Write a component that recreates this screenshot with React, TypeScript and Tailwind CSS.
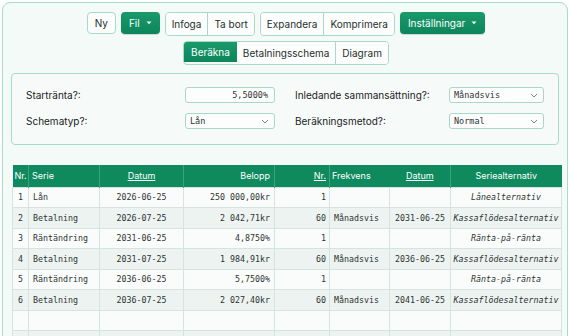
import React from "react";

const sans = { fontFamily: "Inter, 'Noto Sans', sans-serif" };
const mono = { fontFamily: "'DejaVu Sans Mono', monospace" };

function Chevron() {
  return (
    <svg width="8" height="5" viewBox="0 0 8 5" fill="none" className="shrink-0">
      <path d="M1 1 L4 4 L7 1" stroke="#6b7280" strokeWidth="0.9" />
    </svg>
  );
}

function Caret() {
  return (
    <svg width="6" height="4" viewBox="0 0 6 4" className="ml-[6px]">
      <path d="M0.5 0.5 L5.5 0.5 L3 3.2 Z" fill="#ffffff" />
    </svg>
  );
}

const outlineBtn =
  "h-[22px] px-[6px] flex items-center bg-[#fbfefd] text-[#27302c] text-[10px]";
const greenBtn =
  "h-[22px] px-[8px] flex items-center rounded-[4px] bg-gradient-to-b from-[#1a9a6c] to-[#0c855a] text-white text-[10px] shadow-[0_1px_1px_rgba(0,0,0,0.15)]";

type Row = {
  nr: string;
  serie: string;
  datum: string;
  belopp: string;
  n: string;
  frek: string;
  datum2: string;
  alt: string;
};

const rows: Row[] = [
  { nr: "1", serie: "Lån", datum: "2026-06-25", belopp: "250 000,00kr", n: "1", frek: "", datum2: "", alt: "Lånealternativ" },
  { nr: "2", serie: "Betalning", datum: "2026-07-25", belopp: "2 042,71kr", n: "60", frek: "Månadsvis", datum2: "2031-06-25", alt: "Kassaflödesalternativ" },
  { nr: "3", serie: "Räntändring", datum: "2031-06-25", belopp: "4,8750%", n: "1", frek: "", datum2: "", alt: "Ränta-på-ränta" },
  { nr: "4", serie: "Betalning", datum: "2031-07-25", belopp: "1 984,91kr", n: "60", frek: "Månadsvis", datum2: "2036-06-25", alt: "Kassaflödesalternativ" },
  { nr: "5", serie: "Räntändring", datum: "2036-06-25", belopp: "5,7500%", n: "1", frek: "", datum2: "", alt: "Ränta-på-ränta" },
  { nr: "6", serie: "Betalning", datum: "2036-07-25", belopp: "2 027,40kr", n: "60", frek: "Månadsvis", datum2: "2041-06-25", alt: "Kassaflödesalternativ" },
  { nr: "", serie: "", datum: "", belopp: "", n: "", frek: "", datum2: "", alt: "" },
  { nr: "", serie: "", datum: "", belopp: "", n: "", frek: "", datum2: "", alt: "" },
];

const field =
  "h-[16px] rounded-[3px] border border-[#a9d8c7] bg-[#fbfefd] flex items-center text-[8.5px] text-[#333]";

export default function App() {
  return (
    <div className="w-[570px] h-[336px] overflow-hidden bg-white" style={sans}>
      <div className="mx-[2px] mt-[2px] h-[360px] rounded-[8px] border border-[#a6dcc9] bg-[#f3faf8] px-[8px] pt-[9px]">
        {/* toolbar row 1 */}
        <div className="flex justify-center gap-[5px] pl-[2px]">
          <div className={outlineBtn + " rounded-[4px] border border-[#a9d8c7] px-[7px]"}>Ny</div>
          <div className={greenBtn}>
            Fil
            <Caret />
          </div>
          <div className="flex rounded-[4px] border border-[#a9d8c7] overflow-hidden">
            <div className={outlineBtn + " h-[20px]"}>Infoga</div>
            <div className={outlineBtn + " h-[20px] border-l border-[#a9d8c7]"}>Ta bort</div>
          </div>
          <div className="flex rounded-[4px] border border-[#a9d8c7] overflow-hidden">
            <div className={outlineBtn + " h-[20px]"}>Expandera</div>
            <div className={outlineBtn + " h-[20px] border-l border-[#a9d8c7]"}>Komprimera</div>
          </div>
          <div className={greenBtn}>
            Inställningar
            <Caret />
          </div>
        </div>
        {/* toolbar row 2 */}
        <div className="mt-[5px] flex justify-center pl-[2px]">
          <div className="flex rounded-[4px] border border-[#a9d8c7] overflow-hidden">
            <div className="h-[20px] px-[7px] flex items-center bg-gradient-to-b from-[#1a9a6c] to-[#0c855a] text-white text-[10px]">
              Beräkna
            </div>
            <div className={outlineBtn + " h-[20px]"}>Betalningsschema</div>
            <div className={outlineBtn + " h-[20px] border-l border-[#a9d8c7]"}>Diagram</div>
          </div>
        </div>

        {/* settings panel */}
        <div className="mt-[8px] rounded-[4px] border border-[#a6dcc9] bg-[#f6fbfa] pl-[14px] pt-[13px] pb-[15px] text-[10px] text-[#222]">
          <div className="flex items-center h-[16px]">
            <div className="w-[159px] whitespace-nowrap">Starträntа?:</div>
            <div className={field + " w-[90px] justify-end pr-[6px]"} style={mono}>
              5,5000%
            </div>
            <div className="w-[154px] ml-[20px] whitespace-nowrap">Inledande sammansättning?:</div>
            <div className={field + " w-[95px] justify-between pl-[4px] pr-[5px]"} style={mono}>
              Månadsvis
              <Chevron />
            </div>
          </div>
          <div className="flex items-center h-[16px] mt-[10px]">
            <div className="w-[159px] whitespace-nowrap">Schematyp?:</div>
            <div className={field + " w-[90px] justify-between pl-[4px] pr-[5px]"} style={mono}>
              Lån
              <Chevron />
            </div>
            <div className="w-[154px] ml-[20px] whitespace-nowrap">Beräkningsmetod?:</div>
            <div className={field + " w-[95px] justify-between pl-[4px] pr-[5px]"} style={mono}>
              Normal
              <Chevron />
            </div>
          </div>
        </div>

        {/* table */}
        <div className="mt-[20px] ml-[1px]">
          <table className="table-fixed border-collapse w-[549px]">
            <colgroup>
              <col className="w-[16px]" />
              <col className="w-[71px]" />
              <col className="w-[84px]" />
              <col className="w-[91px]" />
              <col className="w-[55px]" />
              <col className="w-[60px]" />
              <col className="w-[61px]" />
              <col className="w-[111px]" />
            </colgroup>
            <thead>
              <tr className="h-[22px] bg-[#0e8a5e] text-white text-[9px]">
                <th className="font-normal text-left pl-[2px] border-r border-[#3aa47e]">Nr.</th>
                <th className="font-normal text-left pl-[3px] border-r border-[#3aa47e]">Serie</th>
                <th className="font-normal text-center underline border-r border-[#3aa47e]">Datum</th>
                <th className="font-normal text-right pr-[4px] border-r border-[#3aa47e]">Belopp</th>
                <th className="font-normal text-right pr-[3px] underline border-r border-[#3aa47e]">Nr.</th>
                <th className="font-normal text-left pl-[2px]">Frekvens</th>
                <th className="font-normal text-center underline border-r border-[#3aa47e]">Datum</th>
                <th className="font-normal text-center">Seriealternativ</th>
              </tr>
            </thead>
            <tbody className="text-[8.3px] text-[#2e3431]" style={mono}>
              {rows.map((r, i) => (
                <tr
                  key={i}
                  className={
                    "h-[20.5px] " + (i % 2 === 1 ? "bg-[#ecf3f0]" : "bg-[#fafcfb]")
                  }
                >
                  <td className="border border-[#d6e4df] pl-[5px] whitespace-nowrap">{r.nr}</td>
                  <td className="border border-[#d6e4df] pl-[4px] whitespace-nowrap">{r.serie}</td>
                  <td className="border border-[#d6e4df] text-center whitespace-nowrap">{r.datum}</td>
                  <td className="border border-[#d6e4df] text-right pr-[4px] whitespace-nowrap">{r.belopp}</td>
                  <td className="border border-[#d6e4df] text-right pr-[3px] whitespace-nowrap">{r.n}</td>
                  <td className="border border-[#d6e4df] pl-[4px] whitespace-nowrap">{r.frek}</td>
                  <td className="border border-[#d6e4df] text-center whitespace-nowrap">{r.datum2}</td>
                  <td className="border border-[#d6e4df] text-center italic whitespace-nowrap overflow-visible">
                    {r.alt}
                  </td>
                </tr>
              ))}
            </tbody>
          </table>
        </div>
      </div>
    </div>
  );
}
